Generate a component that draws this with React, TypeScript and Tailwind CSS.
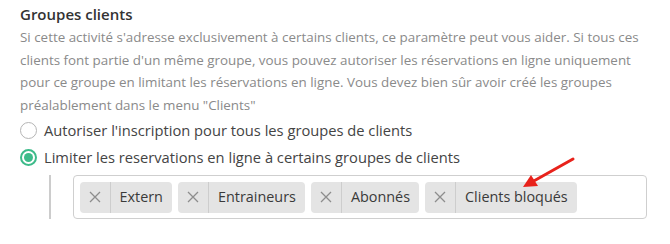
import React from 'react'

const groups = ['Extern', 'Entraineurs', 'Abonnés', 'Clients bloqués']

const Tag: React.FC<{ label: string }> = ({ label }) => (
	<div className="flex h-[31px] items-stretch rounded-[4px] bg-[#e4e4e4] text-[14.4px] text-[#3a3a3a]">
		<span className="flex w-[31px] items-center justify-center border-r border-[#cdcdcd] text-[#8d8d8d]">
			<svg width="12" height="12" viewBox="0 0 12 12" fill="none" stroke="currentColor" strokeWidth="1.3">
				<path d="M1 1 L11 11 M11 1 L1 11" />
			</svg>
		</span>
		<span className="flex items-center px-[9px]">{label}</span>
	</div>
)

const Radio: React.FC<{ checked?: boolean; label: string }> = ({ checked, label }) => (
	<label className="flex h-[22px] items-center gap-[7px] text-[14.7px] text-[#444]">
		{checked ? (
			<span className="flex h-[17px] w-[17px] items-center justify-center rounded-full border-2 border-[#3dbb8a]">
				<span className="h-[9px] w-[9px] rounded-full bg-[#3dbb8a]" />
			</span>
		) : (
			<span className="h-[17px] w-[17px] rounded-full border-[1.5px] border-[#b5b5b5] bg-white" />
		)}
		{label}
	</label>
)

export default function App() {
	return (
		<div className="relative h-[244px] w-[670px] bg-white px-[20px] pt-[4px]" style={{ fontFamily: '"Open Sans", sans-serif' }}>
			<h2 className="text-[15px] font-semibold leading-[20px] text-[#333]">Groupes clients</h2>
			<p className="mt-[2px] w-[630px] text-[13.4px] leading-[22.5px] text-[#8a8a8a]">
				Si cette activité s'adresse exclusivement à certains clients, ce paramètre peut vous aider. Si tous ces clients font partie d'un même groupe, vous pouvez autoriser les réservations en ligne uniquement pour ce groupe en limitant les réservations en ligne. Vous devez bien sûr avoir créé les groupes préalablement dans le menu "Clients"
			</p>
			<div className="mt-[3px] flex flex-col gap-[5px]">
				<Radio label="Autoriser l'inscription pour tous les groupes de clients" />
				<Radio checked label="Limiter les reservations en ligne à certains groupes de clients" />
			</div>
			<div className="mt-[7px] flex">
				<div className="ml-[29px] w-[1.5px] bg-[#cccccc]" />
				<div className="ml-[22px] flex h-[44px] w-[574px] items-center gap-[6px] rounded-[4px] border border-[#cfcfcf] px-[6px]">
					{groups.map((g) => (
						<Tag key={g} label={g} />
					))}
				</div>
			</div>
			<svg className="absolute left-[518px] top-[155px]" width="60" height="36" viewBox="0 0 60 36">
				<path d="M55 4 L14 27" stroke="#e8221b" strokeWidth="3" strokeLinecap="round" />
				<path d="M5 32 L13 20 L20 31 Z" fill="#e8221b" />
			</svg>
		</div>
	)
}
